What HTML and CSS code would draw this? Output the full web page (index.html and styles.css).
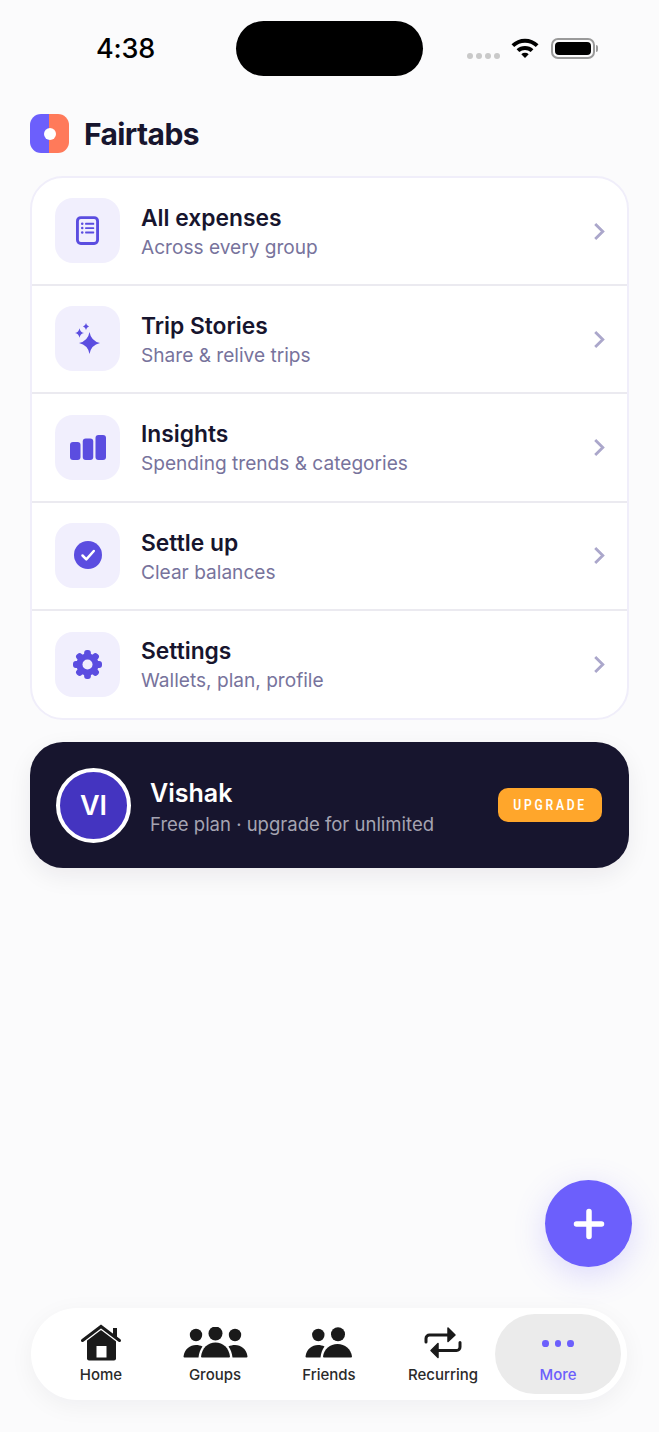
FILE: index.html
```html
<!DOCTYPE html>
<html lang="en">
<head>
<meta charset="utf-8">
<title>Fairtabs</title>
<link rel="stylesheet" href="styles.css">
</head>
<body>
<div class="page">
  <div class="status">
    <span class="time">4:38</span>
    <div class="island"></div>
    <div class="status-right">
      <div class="signal"><i></i><i></i><i></i><i></i></div>
      <svg class="wifi" viewBox="0 0 30 22"><path d="M1.500 7.200A19.500 19.500 0 0 1 28.500 7.200L25.800 10A15.600 15.600 0 0 0 4.200 10Z"/><path d="M6.600 12.300A12.400 12.400 0 0 1 23.400 12.300L20.700 15.100A8.500 8.500 0 0 0 9.300 15.100Z"/><path d="M11.300 17.200A5.400 5.400 0 0 1 18.700 17.200L15 21Z"/></svg>
      <div class="battery"><div class="battery-fill"></div></div>
      <div class="battery-cap"></div>
    </div>
  </div>

  <header class="brand">
    <div class="logo"><span class="logo-dot"></span></div>
    <h1 class="brand-name">Fairtabs</h1>
  </header>

  <section class="menu">
    <a class="row">
      <div class="row-icon">
        <svg viewBox="0 0 24 30" class="ico-list"><rect x="1.500" y="1.500" width="21" height="27" rx="3.500" fill="none" stroke="#5b4de0" stroke-width="3"/><g fill="#5b4de0"><circle cx="6.500" cy="8" r="1.300"/><circle cx="6.500" cy="12.500" r="1.300"/><circle cx="6.500" cy="17" r="1.300"/><rect x="9.500" y="7" width="9.500" height="2" rx=".6"/><rect x="9.500" y="11.500" width="9.500" height="2" rx=".6"/><rect x="9.500" y="16" width="9.500" height="2" rx=".6"/></g></svg>
      </div>
      <div class="row-text"><div class="row-title">All expenses</div><div class="row-sub">Across every group</div></div>
      <svg class="chev" viewBox="0 0 12 20"><path d="M2 2l8 8-8 8"/></svg>
    </a>
    <a class="row">
      <div class="row-icon">
        <svg viewBox="0 0 25 31" class="ico-spark"><g fill="#5b4de0"><path d="M14.500 9Q16 18 25 20 16 22 14.500 31 13 22 4 20 13 18 14.500 9Z"/><path d="M4.500 5.300Q5.200 9.300 9 10 5.200 10.700 4.500 14.700 3.800 10.700 0 10 3.800 9.300 4.500 5.300Z"/><path d="M11 0Q11.500 3 14 3.500 11.500 4 11 7 10.500 4 8 3.500 10.500 3 11 0Z"/></g></svg>
      </div>
      <div class="row-text"><div class="row-title">Trip Stories</div><div class="row-sub">Share &amp; relive trips</div></div>
      <svg class="chev" viewBox="0 0 12 20"><path d="M2 2l8 8-8 8"/></svg>
    </a>
    <a class="row">
      <div class="row-icon">
        <svg viewBox="0 0 36 25" class="ico-bars"><g fill="#5b4de0"><rect x="0" y="7" width="10.500" height="18" rx="3"/><rect x="12.750" y="3.500" width="10.500" height="21.500" rx="3"/><rect x="25.500" y="0" width="10.500" height="25" rx="3"/></g></svg>
      </div>
      <div class="row-text"><div class="row-title">Insights</div><div class="row-sub">Spending trends &amp; categories</div></div>
      <svg class="chev" viewBox="0 0 12 20"><path d="M2 2l8 8-8 8"/></svg>
    </a>
    <a class="row">
      <div class="row-icon">
        <svg viewBox="0 0 28 28" class="ico-check"><circle cx="14" cy="14" r="14" fill="#5b4de0"/><path d="M8.500 14.500l3.800 3.800 7.500-8.300" fill="none" stroke="#fff" stroke-width="2.500" stroke-linecap="round" stroke-linejoin="round"/></svg>
      </div>
      <div class="row-text"><div class="row-title">Settle up</div><div class="row-sub">Clear balances</div></div>
      <svg class="chev" viewBox="0 0 12 20"><path d="M2 2l8 8-8 8"/></svg>
    </a>
    <a class="row">
      <div class="row-icon">
        <svg viewBox="0 0 30 30" class="ico-gear"><g fill="#5b4de0"><circle cx="15" cy="15" r="11.500"/><rect x="11.500" y="0" width="7" height="30" rx="3"/><rect x="11.500" y="0" width="7" height="30" rx="3" transform="rotate(45 15 15)"/><rect x="11.500" y="0" width="7" height="30" rx="3" transform="rotate(90 15 15)"/><rect x="11.500" y="0" width="7" height="30" rx="3" transform="rotate(135 15 15)"/></g><circle cx="15" cy="15" r="5.200" fill="#f1effd"/></svg>
      </div>
      <div class="row-text"><div class="row-title">Settings</div><div class="row-sub">Wallets, plan, profile</div></div>
      <svg class="chev" viewBox="0 0 12 20"><path d="M2 2l8 8-8 8"/></svg>
    </a>
  </section>

  <section class="profile">
    <div class="avatar">VI</div>
    <div class="profile-text">
      <div class="profile-name">Vishak</div>
      <div class="profile-sub">Free plan · upgrade for unlimited</div>
    </div>
    <button class="upgrade"><span class="upgrade-label">UPGRADE</span></button>
  </section>

  <nav class="tabbar">
    <a class="tab">
      <svg class="tab-ico ico-home" viewBox="0 0 44 40"><path d="M8 17L22 6L37 17V35.500A2 2 0 0 1 35 37.500H10A2 2 0 0 1 8 35.500Z" fill="#1a1a1a"/><path d="M3.500 17.500L22 3.500L40.500 17.500" fill="none" stroke="#fff" stroke-width="5.500"/><path d="M3.500 17.500L22 3.500L40.500 17.500" fill="none" stroke="#1a1a1a" stroke-width="3" stroke-linecap="round"/><rect x="34" y="5" width="4" height="9" fill="#1a1a1a"/><rect x="17.500" y="23" width="10" height="11.500" fill="#fff"/></svg>
      <span class="tab-label">Home</span>
    </a>
    <a class="tab">
      <svg class="tab-ico ico-groups" viewBox="0 0 65 32"><g fill="#1a1a1a"><circle cx="13" cy="8" r="6.200"/><circle cx="32.500" cy="6.500" r="7"/><circle cx="52" cy="8" r="6.200"/><path d="M.5 29.500C1.500 22 7 18 13 18C15.500 18 17.500 18.500 19.500 19.500C17.500 22 16 26 15.500 30.500H1.500A1 1 0 0 1 .5 29.500Z"/><path d="M64.500 29.500C63.500 22 58 18 52 18C49.500 18 47.500 18.500 45.500 19.500C47.500 22 49 26 49.500 30.500H63.500A1 1 0 0 0 64.500 29.500Z"/><path d="M18 29.500C19 21 25 15.500 32.500 15.500C40 15.500 46 21 47 29.500A1 1 0 0 1 46 30.500H19A1 1 0 0 1 18 29.500Z"/></g></svg>
      <span class="tab-label">Groups</span>
    </a>
    <a class="tab">
      <svg class="tab-ico ico-friends" viewBox="0 0 48 32"><g fill="#1a1a1a"><circle cx="13.300" cy="8" r="6.200"/><circle cx="33" cy="7.300" r="7"/><path d="M.5 29.500C1.500 22 7 18 13 18C15.500 18 17.500 18.500 19.500 19.500C17.500 22 16 26 15.500 30.500H1.500A1 1 0 0 1 .5 29.500Z"/><path d="M18 29.500C19 22 25 17 32.500 17C40 17 46 22 47 29.500A1 1 0 0 1 46 30.500H19A1 1 0 0 1 18 29.500Z"/></g></svg>
      <span class="tab-label">Friends</span>
    </a>
    <a class="tab">
      <svg class="tab-ico ico-repeat" viewBox="0 0 38 32"><g fill="none" stroke="#1a1a1a" stroke-width="3" stroke-linecap="round"><path d="M2 15V11.500A3.500 3.500 0 0 1 5.500 8H25"/><path d="M36 15.500V20A3.500 3.500 0 0 1 32.500 23.500H13"/></g><path d="M24 1L31 8L24 14.500Z M14 16.500L7 23.500L14 30.500Z" fill="#1a1a1a" stroke="#1a1a1a" stroke-width="1.500" stroke-linejoin="round"/></svg>
      <span class="tab-label">Recurring</span>
    </a>
    <a class="tab tab-active">
      <div class="dots"><i></i><i></i><i></i></div>
      <span class="tab-label">More</span>
    </a>
  </nav>

  <button class="fab"><svg viewBox="0 0 32 32" class="fab-plus"><path d="M16 3.500V28.500M3.500 16H28.500" stroke="#fff" stroke-width="5.500" stroke-linecap="round"/></svg></button>
</div>
</body>
</html>
```
FILE: styles.css
```css
* { box-sizing: border-box; }
html, body { margin: 0; padding: 0; }
body { background: #fbfbfc; font-family: Inter, "Liberation Sans", sans-serif; color: #17152e; }
.page { position: relative; width: 659px; height: 1432px; display: flex; flex-direction: column; overflow: hidden; }

.status { display: flex; align-items: center; height: 55px; margin-top: 21px; padding-left: 96px; }
.time { width: 140px; font-size: 27px; font-weight: 500; color: #000; letter-spacing: -.2px; }
.island { width: 187px; height: 55px; border-radius: 28px; background: #000; }
.status-right { display: flex; align-items: center; margin-left: 44px; }
.signal { display: flex; gap: 3px; margin-top: 14px; margin-right: 10px; }
.signal i { display: block; width: 6px; height: 6px; border-radius: 50%; background: #c9c9c9; }
.wifi { width: 30px; height: 22px; fill: #000; margin-right: 11px; margin-top: -2px; }
.battery { width: 44px; height: 21px; border: 2px solid #9a9a9a; border-radius: 7px; padding: 2px; }
.battery-fill { width: 100%; height: 100%; border-radius: 4px; background: #000; }
.battery-cap { width: 2px; height: 7px; margin-left: 1px; background: #9a9a9a; border-radius: 0 2px 2px 0; }

.brand { display: flex; align-items: center; gap: 15px; margin: 38px 30px 23px; height: 39px; }
.logo { width: 39px; height: 39px; border-radius: 11px; background: linear-gradient(90deg, #6c5ffc 50%, #ff7a5a 50%); display: flex; align-items: center; justify-content: center; }
.logo-dot { width: 12px; height: 12px; border-radius: 50%; background: #fff; }
.brand-name { margin: 0; font-family: Inter, sans-serif; font-size: 30px; font-weight: 700; letter-spacing: -.6px; color: #17152e; }

.menu { margin: 0 30px; background: #fff; border: 2px solid #f0eefa; border-radius: 33px; overflow: hidden; }
.row { display: flex; align-items: center; height: 108.200px; padding: 0 22px .6px 23px; border-bottom: 2px solid #ebeaf0; }
.row:last-child { height: 106.800px; padding-bottom: 0; border-bottom: 0; }
.row-icon { flex: none; width: 65px; height: 65px; border-radius: 18px; background: #f1effd; display: flex; align-items: center; justify-content: center; }
.ico-list { width: 23px; height: 29px; }
.ico-spark { width: 25px; height: 31px; }
.ico-bars { width: 36px; height: 25px; }
.ico-check { width: 28px; height: 28px; }
.ico-gear { width: 29px; height: 29px; }
.row-text { flex: 1; margin: 2.500px 0 0 21px; }
.row-title { font-size: 22.800px; font-weight: 600; line-height: 28px; color: #17152e; }
.row-sub { font-size: 19.100px; line-height: 25px; color: #77739c; margin-top: 3px; }
.chev { width: 12px; height: 19px; margin-top: 1px; fill: none; stroke: #aba7cb; stroke-width: 3; }

.profile { display: flex; align-items: center; height: 126px; margin: 22.700px 30px 0; padding: 0 27px 0 26px; background: #17152e; border-radius: 33px; box-shadow: 0 8px 24px rgba(23, 21, 46, .07); }
.avatar { flex: none; width: 75px; height: 75px; border: 4px solid #fff; border-radius: 50%; background: #4434c0; color: #fff; font-size: 27px; font-weight: 600; display: flex; align-items: center; justify-content: center; }
.profile-text { flex: 1; margin: 5.400px 0 0 19px; }
.profile-name { font-size: 25px; font-weight: 600; line-height: 31px; color: #fff; }
.profile-sub { font-size: 18.500px; line-height: 25px; margin-top: 3px; color: #a5a4b2; }
.upgrade { width: 104px; height: 34px; border: 0; border-radius: 10px; background: #ffa62b; color: #fff; font-family: Roboto, sans-serif; font-size: 15.500px; font-weight: 600; padding: 0; }
.upgrade-label { display: inline-block; letter-spacing: 3.500px; transform: scaleX(.78); }

.tabbar { display: flex; align-items: stretch; height: 92px; margin: auto 32px 32px 31px; padding: 6px 6px 6px 13px; background: #fff; border-radius: 46px; box-shadow: 0 6px 24px rgba(23, 21, 46, .05); }
.tab { flex: 0 0 114px; display: flex; flex-direction: column; align-items: center; justify-content: flex-end; padding-bottom: 10px; }
.tab-ico { display: block; }
.ico-home { width: 44px; height: 40px; margin-bottom: 3px; }
.ico-groups { width: 65px; height: 32px; margin-bottom: 7px; }
.ico-friends { width: 48px; height: 32px; margin-bottom: 7px; }
.ico-repeat { width: 38px; height: 32px; margin-bottom: 7px; }
.tab-label { font-size: 15px; font-weight: 500; line-height: 18px; color: #2a2a2a; }
.tab-active { flex: 0 0 126px; margin-left: -5px; border-radius: 40px; background: #ebebeb; }
.tab-active .tab-label { color: #6c5ffc; }
.dots { display: flex; gap: 5.600px; margin-bottom: 19px; }
.dots i { display: block; width: 6.700px; height: 6.700px; border-radius: 50%; background: #6c5ffc; }

.fab { position: absolute; left: 545px; top: 1180px; width: 87px; height: 87px; border: 0; border-radius: 50%; padding: 0; background: #6c5ffc; display: flex; align-items: center; justify-content: center; box-shadow: 0 8px 32px rgba(108, 95, 252, .22); }
.fab-plus { width: 32px; height: 32px; }
```
